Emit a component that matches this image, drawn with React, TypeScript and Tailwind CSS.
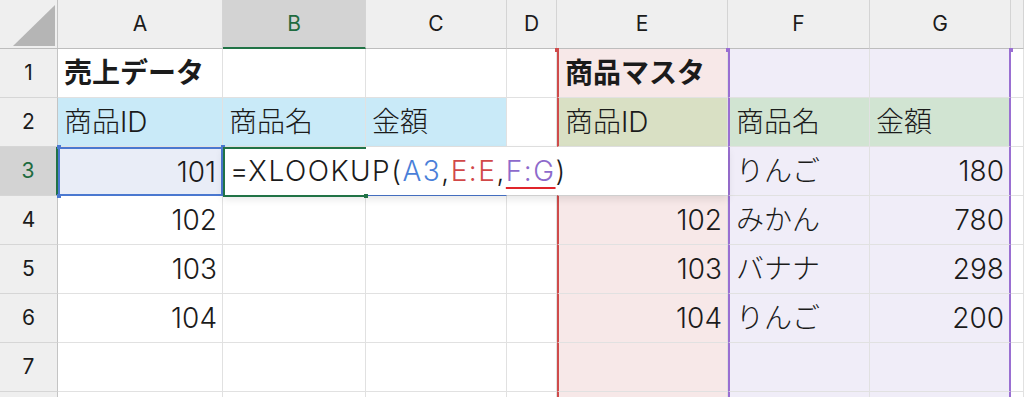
import React from "react";

const cols = ["A", "B", "C", "D", "E", "F", "G", ""];

type Cell = { text?: string; bold?: boolean; right?: boolean; bg?: string; extra?: string };

const pink = "bg-[#f7e8e8]";
const lav = "bg-[#f0edf8]";
const eLine = "border-l-2 border-l-[#cf4b4b]";
const fLine = "border-l-2 border-l-[#9a6fd2]";
const gLine = "border-r-2 border-r-[#9a6fd2]";

// rows 1..8, columns A..G (+ edge column)
const rows: Cell[][] = [
  [
    { text: "売上データ", bold: true },
    {},
    {},
    {},
    { text: "商品マスタ", bold: true, bg: pink, extra: eLine },
    { bg: lav, extra: fLine },
    { bg: lav, extra: gLine },
    {},
  ],
  [
    { text: "商品ID", bg: "bg-[#c9eaf8]" },
    { text: "商品名", bg: "bg-[#c9eaf8]" },
    { text: "金額", bg: "bg-[#c9eaf8]" },
    {},
    { text: "商品ID", bg: "bg-[#d9e0c4]", extra: eLine },
    { text: "商品名", bg: "bg-[#d1e4d2]", extra: fLine },
    { text: "金額", bg: "bg-[#d1e4d2]", extra: gLine },
    {},
  ],
  [
    { text: "101", right: true, bg: "bg-[#e9edf7]", extra: "!border-2 !border-[#4a78d0]" },
    {},
    { extra: "!border-b-[#4a78d0]" },
    {},
    { extra: eLine },
    { text: "りんご", bg: lav, extra: fLine },
    { text: "180", right: true, bg: lav, extra: gLine },
    {},
  ],
  [
    { text: "102", right: true },
    {},
    {},
    {},
    { text: "102", right: true, bg: pink, extra: eLine },
    { text: "みかん", bg: lav, extra: fLine },
    { text: "780", right: true, bg: lav, extra: gLine },
    {},
  ],
  [
    { text: "103", right: true },
    {},
    {},
    {},
    { text: "103", right: true, bg: pink, extra: eLine },
    { text: "バナナ", bg: lav, extra: fLine },
    { text: "298", right: true, bg: lav, extra: gLine },
    {},
  ],
  [
    { text: "104", right: true },
    {},
    {},
    {},
    { text: "104", right: true, bg: pink, extra: eLine },
    { text: "りんご", bg: lav, extra: fLine },
    { text: "200", right: true, bg: lav, extra: gLine },
    {},
  ],
  [{}, {}, {}, {}, { bg: pink, extra: eLine }, { bg: lav, extra: fLine }, { bg: lav, extra: gLine }, {}],
  [{}, {}, {}, {}, { bg: pink, extra: eLine }, { bg: lav, extra: fLine }, { bg: lav, extra: gLine }, {}],
];

function Corner() {
  return (
    <div className="bg-[#efefef] border-r border-b border-r-[#c4c4c4] border-b-[#bdbdbd]">
      <svg width="57" height="48" viewBox="0 0 57 48">
        <polygon points="13,46 55,46 55,5" fill="#b5b5b5" />
      </svg>
    </div>
  );
}

function Handle({ className }: { className: string }) {
  return <div className={"absolute w-[4px] h-[4px] " + className} />;
}

export default function App() {
  return (
    <div
      className="relative w-[1024px] h-[397px] overflow-hidden bg-white text-[#1b1b1b]"
      style={{ fontFamily: 'Inter, "Noto Sans CJK JP", "Noto Sans", sans-serif' }}
    >
      <div className="grid grid-cols-[58px_165px_143px_141px_50px_171px_142px_141px_13px] grid-rows-[49px_49px_49px_49px_49px_49px_49px_49px_48px_20px]">
        <Corner />
        {cols.map((c, i) => (
          <div
            key={"h" + i}
            className={
              "flex items-center justify-center text-[21px] border-b border-r border-r-[#d4d4d4] " +
              (c === "B"
                ? "bg-[#d3d3d3] text-[#1f6b40] border-b-2 border-b-[#217346]"
                : "bg-[#efefef] border-b-[#bdbdbd]")
            }
          >
            {c}
          </div>
        ))}

        {rows.map((r, ri) => (
          <React.Fragment key={"r" + ri}>
            <div
              className={
                "flex items-center justify-center text-[21px] border-b border-b-[#d6d6d6] " +
                (ri === 2
                  ? "bg-[#d3d3d3] text-[#1f6b40] border-r-2 border-r-[#217346]"
                  : "bg-[#efefef] border-r border-r-[#c4c4c4]")
              }
            >
              {ri < 7 ? ri + 1 : ""}
            </div>
            {r.map((cell, ci) => (
              <div
                key={ci}
                className={
                  "flex items-center overflow-visible whitespace-nowrap text-[28px] leading-none border-r border-b border-[#e1e1e1] " +
                  (cell.right ? "justify-end pr-[5px] " : "justify-start pl-[6px] ") +
                  (cell.bold ? "font-bold " : "font-light ") +
                  (cell.bg ?? "bg-white") +
                  " " +
                  (cell.extra ?? "")
                }
              >
                {cell.text}
              </div>
            ))}
          </React.Fragment>
        ))}
      </div>

      {/* range handles */}
      <Handle className="left-[555px] top-[48px] bg-[#cf4b4b]" />
      <Handle className="left-[726px] top-[48px] bg-[#9a6fd2]" />
      <Handle className="left-[1009px] top-[48px] bg-[#9a6fd2]" />
      <Handle className="left-[57px] top-[145px] bg-[#4a78d0]" />
      <Handle className="left-[221px] top-[145px] bg-[#4a78d0]" />
      <Handle className="left-[57px] top-[194px] bg-[#4a78d0]" />

      {/* in-cell editor over B3:E3 */}
      <div className="absolute left-[223px] top-[147px] w-[505px] h-[48px] bg-white shadow-[0_4px_8px_rgba(0,0,0,0.10)] flex items-center pl-[7px] text-[28px] font-light leading-none tracking-[1.5px] whitespace-nowrap">
        <div className="absolute left-0 top-0 w-[143px] h-[50px] border-2 border-r-0 border-[#217346]" />
        <Handle className="left-[141px] top-[47px] bg-[#217346]" />
        <span>=XLOOKUP(</span>
        <span className="text-[#4a7fd9]">A3</span>
        <span>,</span>
        <span className="text-[#d14848]">E:E</span>
        <span>,</span>
        <span className="text-[#8d6acb] underline decoration-[#e0252b] decoration-2 underline-offset-[6px]">F:G</span>
        <span>)</span>
      </div>
    </div>
  );
}
